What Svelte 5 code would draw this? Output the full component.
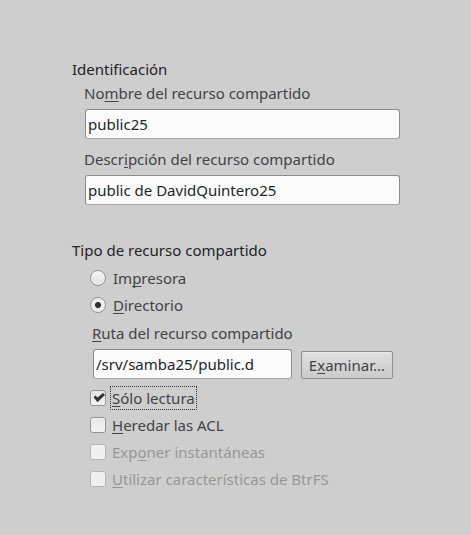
<script>
  let name = $state('public25');
  let description = $state('public de DavidQuintero25');
  let path = $state('/srv/samba25/public.d');
  let kind = $state('directory');
  let readOnly = $state(true);
  let inheritAcls = $state(false);
</script>

<main>
  <form onsubmit={(e) => e.preventDefault()}>
    <fieldset>
      <legend>Identificación</legend>
      <div class="fields">
        <label for="name">No<u>m</u>bre del recurso compartido</label>
        <input id="name" type="text" bind:value={name} />
        <label for="description">Descr<u>i</u>pción del recurso compartido</label>
        <input id="description" type="text" bind:value={description} />
      </div>
    </fieldset>

    <fieldset>
      <legend>Tipo de recurso compartido</legend>
      <div class="options">
        <label class="option radio">
          <input type="radio" name="kind" value="printer" bind:group={kind} />
          <span>Im<u>p</u>resora</span>
        </label>
        <label class="option radio">
          <input type="radio" name="kind" value="directory" bind:group={kind} />
          <span><u>D</u>irectorio</span>
        </label>
        <div class="path">
          <label for="path"><u>R</u>uta del recurso compartido</label>
          <div class="path-row">
            <input id="path" type="text" bind:value={path} />
            <button type="button">E<u>x</u>aminar...</button>
          </div>
        </div>
        <label class="option">
          <input type="checkbox" bind:checked={readOnly} />
          <span class="focused"><u>S</u>ólo lectura</span>
        </label>
        <label class="option">
          <input type="checkbox" bind:checked={inheritAcls} />
          <span><u>H</u>eredar las ACL</span>
        </label>
        <label class="option disabled">
          <input type="checkbox" disabled />
          <span>Exp<u>o</u>ner instantáneas</span>
        </label>
        <label class="option disabled">
          <input type="checkbox" disabled />
          <span><u>U</u>tilizar características de BtrFS</span>
        </label>
      </div>
    </fieldset>
  </form>
</main>

<style>
  :global(body) {
    margin: 0;
    background: #cecece;
  }

  main {
    padding: 59px 71px 45px 72px;
    font: 15px/20px 'Noto Sans', sans-serif;
    color: #414345;
  }

  form {
    display: flex;
    flex-direction: column;
    gap: 35px;
  }

  fieldset {
    min-width: 0;
    margin: 0;
    padding: 0;
    border: 0;
  }

  legend {
    padding: 0;
    color: #222426;
  }

  label {
    display: block;
  }

  u {
    text-decoration: underline 1px;
    text-underline-offset: 2px;
    text-decoration-skip-ink: none;
  }

  input,
  button {
    box-sizing: border-box;
    margin: 0;
    font: inherit;
  }

  input[type='text'] {
    display: block;
    width: 100%;
    height: 30px;
    padding: 0 2px;
    border: 1px solid #8b8b8b;
    border-bottom-color: #a4a4a4;
    border-radius: 3px;
    outline: 0;
    background: #fcfcfc;
    color: #232627;
  }

  .fields {
    padding: 4px 0 0 12px;
  }

  .fields input {
    width: calc(100% - 1px);
    margin: 6px 0 10px 1px;
  }

  .fields input:last-child {
    margin-bottom: 0;
  }

  .options {
    display: flex;
    flex-direction: column;
    gap: 7px;
    padding: 8px 0 0 18px;
  }

  .option {
    display: flex;
    align-items: center;
    gap: 6px;
    height: 20px;
  }

  .radio {
    gap: 7px;
  }

  .option input {
    appearance: none;
    flex: none;
    width: 16px;
    height: 16px;
    border: 1px solid #929292;
    border-radius: 3px;
    background: linear-gradient(#e6e6e6, #f5f5f5);
    box-shadow: inset 0 0 0 1px #f2f2f2;
  }

  .option input[type='radio'] {
    border-radius: 50%;
    background: linear-gradient(#f4f4f4, #e2e2e2);
  }

  .option input[type='radio']:checked {
    background: radial-gradient(circle, #2b3032 0 2.6px, #ececec 3.4px);
  }

  .option input[type='checkbox']:checked {
    box-shadow: none;
    background:
      url("data:image/svg+xml,%3Csvg xmlns='http://www.w3.org/2000/svg' viewBox='0 0 14 14'%3E%3Cpath d='M2.6 6.2 4.4 4.5 6.5 6.6 12 1.9 14 3.9 6.5 11.2Z' fill='%23303436'/%3E%3C/svg%3E")
        center / 14px 14px no-repeat,
      linear-gradient(#e6e6e6, #f5f5f5);
  }

  .disabled {
    color: #969696;
  }

  .disabled input {
    border-color: #b5b5b5;
    background: #efefef;
  }

  .option span {
    white-space: nowrap;
  }

  .option .focused {
    margin: 0 -2px;
    padding: 1px;
    border: 1px dotted #303030;
  }

  .path {
    padding: 1px 7px 2px 2px;
  }

  .path-row {
    display: flex;
    align-items: flex-end;
    gap: 9px;
    margin: 6px 0 0 1px;
  }

  .path-row input {
    flex: 1;
    min-width: 0;
  }

  button {
    flex: none;
    height: 28px;
    padding: 0 7px;
    border: 1px solid #8e8e8e;
    border-radius: 2px;
    background: linear-gradient(#dfdfdf, #cbcbcb);
    box-shadow: inset 0 1px #ebebeb;
    color: #414345;
  }
</style>
